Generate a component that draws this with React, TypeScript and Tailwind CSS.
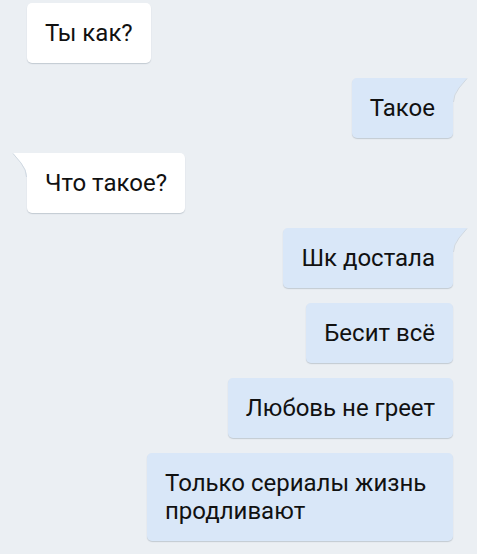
import React from "react";

type Msg = { text: string; out: boolean; tail?: boolean };

const MESSAGES: Msg[] = [
  { text: "Ты как?", out: false },
  { text: "Такое", out: true, tail: true },
  { text: "Что такое?", out: false, tail: true },
  { text: "Шк достала", out: true, tail: true },
  { text: "Бесит всё", out: true },
  { text: "Любовь не греет", out: true },
  { text: "Только сериалы жизнь продливают", out: true },
];

function Tail({ out }: { out: boolean }) {
  const fill = out ? "#d9e7f8" : "#ffffff";
  return (
    <svg
      width="16"
      height="24"
      viewBox="0 0 16 24"
      className={out ? "absolute -right-[15px] top-0" : "absolute -left-[15px] top-0 -scale-x-100"}
    >
      <path d="M0 0 H15 L7 10 Q1 17 1 24 H0 Z" fill={fill} />
      <path d="M15 0.5 L7 10 Q1.5 17 1.5 24" fill="none" stroke="#cfd8e1" strokeWidth="1" />
    </svg>
  );
}

function Bubble({ msg }: { msg: Msg }) {
  const base =
    "relative max-w-[306px] px-[18px] py-[16px] text-[24px] leading-[28px] text-[#111111] shadow-[0_1px_1px_rgba(120,135,150,0.35)]";
  const color = msg.out ? "bg-[#d9e7f8]" : "bg-white";
  const radius = msg.tail
    ? msg.out
      ? "rounded-[5px] rounded-tr-none"
      : "rounded-[5px] rounded-tl-none"
    : "rounded-[5px]";
  return (
    <div className={`${base} ${color} ${radius}`}>
      {msg.tail && <Tail out={msg.out} />}
      {msg.text}
    </div>
  );
}

export default function App() {
  return (
    <div
      className="min-h-screen w-[477px] bg-[#ebeff3] pt-[3px] flex flex-col gap-[15px]"
      style={{ fontFamily: "Roboto, 'Noto Sans', sans-serif" }}
    >
      {MESSAGES.map((m, i) => (
        <div key={i} className={m.out ? "flex justify-end pr-[24px]" : "flex justify-start pl-[27px]"}>
          <Bubble msg={m} />
        </div>
      ))}
    </div>
  );
}
